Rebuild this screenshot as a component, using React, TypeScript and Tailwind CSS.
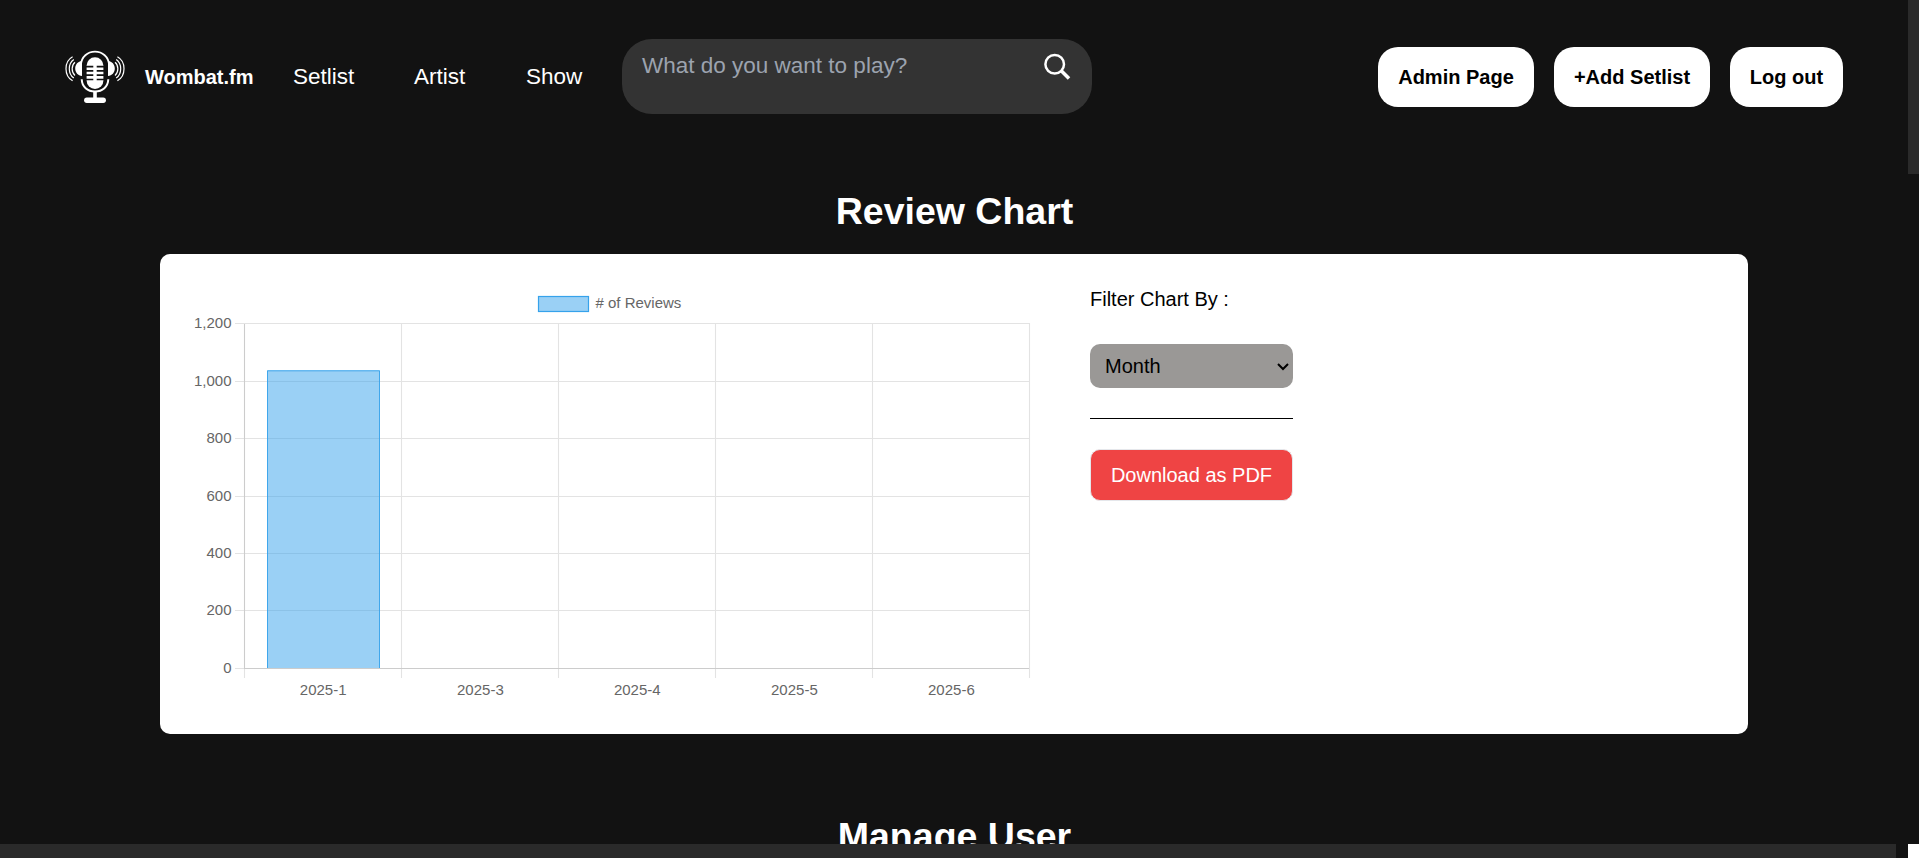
const yTicks = [
  { label: "1,200", y: 323.5 },
  { label: "1,000", y: 381.5 },
  { label: "800", y: 438.5 },
  { label: "600", y: 496.5 },
  { label: "400", y: 553.5 },
  { label: "200", y: 610.5 },
  { label: "0", y: 668.5 },
];

const xLines = [401.5, 558.5, 715.5, 872.5, 1029.5];

const xLabels = [
  { label: "2025-1", x: 323.2 },
  { label: "2025-3", x: 480.4 },
  { label: "2025-4", x: 637.3 },
  { label: "2025-5", x: 794.4 },
  { label: "2025-6", x: 951.4 },
];

function Logo() {
  return (
    <svg viewBox="0 0 68 60" className="-mt-px h-[60px] w-[68px] shrink-0" fill="none" stroke="#fff">
      <path d="M18.800 19C19.500 10.800 25.500 5.700 33 5.700S46.500 10.800 47.200 19" strokeWidth="1.800" />
      <path d="M20 15v15c-4-.2-6.800-3.400-6.800-7.500S16 15.200 20 15zM46 15v15c4-.2 6.800-3.400 6.800-7.500S50 15.200 46 15z" fill="#fff" stroke="none" />
      <rect x="24.600" y="11.200" width="16.800" height="31.800" rx="8.400" fill="#fff" stroke="none" />
      <path
        d="M24 20.600h7.300M34.700 20.600H42M24 24.900h7.300M34.700 24.900H42M24 29.200h7.300M34.700 29.200H42M24 33.500h7.300M34.700 33.500H42"
        stroke="#121212"
        strokeWidth="1.700"
      />
      <path d="M19.700 33.200c.3 7.600 5.800 12.200 13.300 12.200s13-4.600 13.300-12.200" strokeWidth="2" />
      <path d="M33 46v7" strokeWidth="3.600" />
      <path d="M24.800 54.200h16.400" strokeWidth="5.400" strokeLinecap="round" />
      <path
        d="M10.600 10.800C1.800 15.600 1.800 29.800 10.600 34.800M11.800 13.500C5.800 17.600 5.800 27.800 11.800 32.100M13 16.200C9.200 19.200 9.200 26.300 13 29.500"
        strokeWidth="1.200"
      />
      <path
        d="M55.400 10.800C64.200 15.600 64.200 29.800 55.400 34.800M54.200 13.500C60.200 17.600 60.200 27.800 54.200 32.100M53 16.200C56.800 19.200 56.800 26.300 53 29.500"
        strokeWidth="1.200"
      />
    </svg>
  );
}

function ReviewChart() {
  return (
    <svg viewBox="185 284 850 420" className="h-[420px] w-[850px] shrink-0" fontSize="15" fill="#666">
      <rect x="538.500" y="296.500" width="50" height="15" fill="#9ad0f5" stroke="#36a2eb" strokeWidth="1.200" />
      <text x="595.500" y="308">
        # of Reviews
      </text>
      <g stroke="#e3e3e3" strokeWidth="1.100">
        {yTicks.map((t) => (
          <path key={t.label} d={`M235 ${t.y}H1030`} />
        ))}
        {xLines.map((x) => (
          <path key={x} d={`M${x} 323V678`} />
        ))}
        <path d="M244.500 668V678" />
      </g>
      <path d="M244.500 324V668.500H1029" fill="none" stroke="#ccc" strokeWidth="1.100" />
      <rect x="267" y="370.300" width="113" height="297.700" fill="#36a2eb" fillOpacity=".5" />
      <path d="M267.500 668V370.800H379.500V668" fill="none" stroke="#36a2eb" strokeOpacity=".9" />
      <g textAnchor="end">
        {yTicks.map((t) => (
          <text key={t.label} x="231.500" y={t.y + 4.8}>
            {t.label}
          </text>
        ))}
      </g>
      <g textAnchor="middle">
        {xLabels.map((t) => (
          <text key={t.label} x={t.x} y="695">
            {t.label}
          </text>
        ))}
      </g>
    </svg>
  );
}

export default function App() {
  return (
    <div className="flex h-[858px] w-full overflow-hidden bg-[#121212] font-['Liberation_Sans',Arial,sans-serif] text-white">
      <div className="flex w-[1908px] shrink-0 flex-col">
        <div className="flex h-[844px] flex-col overflow-hidden">
          <header className="flex h-[153px] shrink-0 items-center pr-[65px] pl-[62px]">
            <Logo />
            <span className="ml-[15px] w-[148px] text-xl font-bold">Wombat.fm</span>
            <nav className="flex text-[22.5px]">
              <a className="w-[121px]">Setlist</a>
              <a className="w-[112px]">Artist</a>
              <a className="w-[96px]">Show</a>
            </nav>
            <div className="flex h-[75px] w-[470px] items-start justify-between rounded-[30px] bg-[#333] pt-[9px] pr-[20px] pl-5">
              <span className="text-[22.5px] leading-9 text-[#9ca3af]">What do you want to play?</span>
              <svg viewBox="0 0 30 30" className="mt-[3px] h-[30px] w-[30px]" fill="none" stroke="#fff">
                <circle cx="12.700" cy="13.200" r="9.300" strokeWidth="2.500" />
                <path d="M19 19.500l8 8" strokeWidth="3.500" />
              </svg>
            </div>
            <div className="ml-auto flex gap-5 text-xl font-bold text-black">
              <button className="h-[60px] w-[156px] rounded-[20px] bg-white">Admin Page</button>
              <button className="h-[60px] w-[156px] rounded-[20px] bg-white">+Add Setlist</button>
              <button className="h-[60px] w-[113px] rounded-[20px] bg-white">Log out</button>
            </div>
          </header>
          <h1 className="mt-9 h-[65px] shrink-0 pl-px text-center text-[37.5px] leading-[45px] font-bold">
            Review Chart
          </h1>
          <main className="mx-40 flex h-[480px] shrink-0 rounded-[10px] bg-white pt-[30px] pl-[25px]">
            <ReviewChart />
            <section className="ml-[55px] w-[203px] text-xl text-black">
              <p className="leading-[30px]">Filter Chart By :</p>
              <div className="mt-[30px] flex h-11 items-center justify-between rounded-[10px] bg-[#9a9896] pr-1 pl-[15px]">
                <span>Month</span>
                <svg viewBox="0 0 12 8" className="mt-0.5 h-2 w-3" fill="none" stroke="#000" strokeWidth="2">
                  <path d="M1 1l5 5 5-5" />
                </svg>
              </div>
              <hr className="mt-[30px] border-black" />
              <button className="mt-[30px] h-[52px] w-full rounded-[10px] border border-gray-200 bg-[#ef4444] text-white">
                Download as PDF
              </button>
            </section>
          </main>
          <h2 className="mt-20 shrink-0 pl-px text-center text-[37.5px] leading-[45px] font-bold">Manage User</h2>
        </div>
        <div className="h-[14px] w-[1896px] bg-[#2a2a2a]" />
      </div>
      <div className="flex w-[11px] shrink-0 flex-col justify-between">
        <div className="h-[174px] bg-[#2a2a2a]" />
        <div className="h-[14px] bg-white" />
      </div>
    </div>
  );
}
